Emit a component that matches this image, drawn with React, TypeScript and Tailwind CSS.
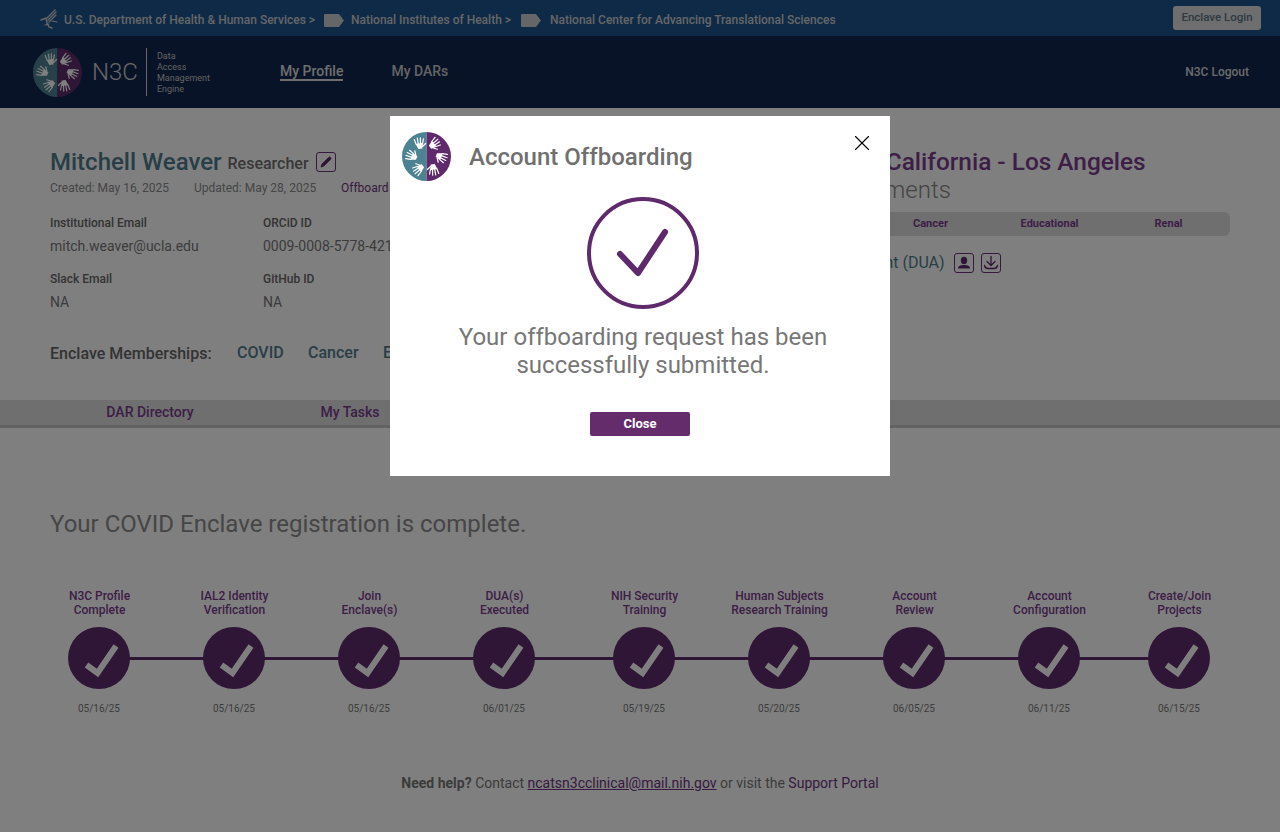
import React from "react";
import { Pencil, X } from "lucide-react";

const steps = [
  { top: "N3C Profile", bottom: "Complete", date: "05/16/25", gap: "ml-0" },
  { top: "IAL2 Identity", bottom: "Verification", date: "05/16/25", gap: "ml-[35px]" },
  { top: "Join", bottom: "Enclave(s)", date: "05/16/25", gap: "ml-[35px]" },
  { top: "DUA(s)", bottom: "Executed", date: "06/01/25", gap: "ml-[35px]" },
  { top: "NIH Security", bottom: "Training", date: "05/19/25", gap: "ml-[40px]" },
  { top: "Human Subjects", bottom: "Research Training", date: "05/20/25", gap: "ml-[35px]" },
  { top: "Account", bottom: "Review", date: "06/05/25", gap: "ml-[35px]" },
  { top: "Account", bottom: "Configuration", date: "06/11/25", gap: "ml-[35px]" },
  { top: "Create/Join", bottom: "Projects", date: "06/15/25", gap: "ml-[30px]" },
];

const Hand = ({ angle }: { angle: number }) => (
  <g transform={`rotate(${angle} 24.5 24.5)`}>
    <g transform="rotate(22 24.5 11)">
      <path d="M22.5 15 L26.5 15 L28 9.5 L20.5 9.5 Z" fill="white" />
      <g stroke="white" strokeWidth="1.2" strokeLinecap="round">
        <line x1="21" y1="10" x2="19.8" y2="5" />
        <line x1="23.2" y1="10" x2="23" y2="4" />
        <line x1="25.4" y1="10" x2="26" y2="4.2" />
        <line x1="27.5" y1="10" x2="29" y2="5.5" />
        <line x1="27" y1="13" x2="30.5" y2="10.5" />
      </g>
    </g>
  </g>
);

const Logo = ({ className }: { className: string }) => (
  <svg viewBox="0 0 49 49" className={className}>
    <path d="M24.5 0 A24.5 24.5 0 0 0 24.5 49 Z" fill="#4d8292" />
    <path d="M24.5 0 A24.5 24.5 0 0 1 24.5 49 Z" fill="#5e2a6c" />
    {[30, 90, 150, 210, 270, 330].map((a) => (
      <Hand key={a} angle={a} />
    ))}
  </svg>
);

const Tag = () => (
  <svg viewBox="0 0 21 13" className="w-[21px] h-[13px] shrink-0">
    <path d="M1 0 H15 L20 6.5 L15 13 H1 Q0 13 0 12 V1 Q0 0 1 0 Z" fill="#c9ccd0" />
    <path d="M16.5 0.5 L20.6 6.5 L16.5 12.5" fill="none" stroke="#1f558f" strokeWidth="1" />
  </svg>
);

const Eagle = () => (
  <svg viewBox="0 0 18 20" className="w-[18px] h-[20px] shrink-0" fill="none" stroke="#c9ccd0" strokeLinecap="round">
    <path d="M7 9 L15 1" strokeWidth="1.3" />
    <path d="M8 11 L16 3" strokeWidth="1.3" />
    <path d="M9 13 L16 6" strokeWidth="1.3" />
    <path d="M1 11 L6 9 L7 14 L9 18 L12 19" strokeWidth="1.5" />
    <path d="M5 16 L9 15" strokeWidth="1.2" />
    <path d="M12 12 L17 13" strokeWidth="1.2" />
  </svg>
);

const Field = ({ label, value, className }: { label: string; value: string; className: string }) => (
  <div className={className}>
    <p className="text-[12px] leading-[14px] font-medium text-[#666]">{label}</p>
    <p className="mt-[7px] text-[14px] leading-[18px] text-[#777] whitespace-nowrap">{value}</p>
  </div>
);

const IconBox = ({ children }: { children: React.ReactNode }) => (
  <span className="w-5 h-5 flex items-center justify-center rounded-[3px] border border-[#6b3478] text-[#5e2a6c]">
    {children}
  </span>
);

export default function App() {
  return (
    <div className="relative h-[832px] overflow-hidden bg-white font-['Roboto',sans-serif]">
      {/* top strip */}
      <div className="h-9 bg-[#1f558f] flex items-center pl-10 pr-[19px] text-[12px] font-medium text-[#c9ccd0]">
        <span className="mt-[2px]"><Eagle /></span>
        <span className="ml-[6px] mt-1 whitespace-nowrap">U.S. Department of Health &amp; Human Services &gt;</span>
        <span className="ml-[9px] mt-1"><Tag /></span>
        <span className="ml-[6px] mt-1 whitespace-nowrap">National Institutes of Health &gt;</span>
        <span className="ml-[10px] mt-1"><Tag /></span>
        <span className="ml-[8px] mt-1 whitespace-nowrap">National Center for Advancing Translational Sciences</span>
        <button className="ml-auto w-[88px] h-6 rounded-[3px] bg-[#dcdcdc] text-[11.5px] font-medium text-[#5a7486]">
          Enclave Login
        </button>
      </div>

      {/* nav */}
      <div className="h-[72px] bg-[#10264e] flex items-center pl-[33px] pr-[31px]">
        <Logo className="w-[49px] h-[49px] shrink-0" />
        <span className="ml-[10px] text-[24px] font-light text-[#d0d0d0]">N3C</span>
        <div className="ml-2 w-px h-12 bg-[#d0d0d0]" />
        <div className="ml-[10px] mt-[2px] w-[53px] text-[9px] leading-[11px] text-[#c4c4c4]">
          <p>Data</p>
          <p>Access</p>
          <p>Management</p>
          <p>Engine</p>
        </div>
        <a className="ml-[70px] text-[14px] font-medium leading-4 text-[#dcdcdc] border-b-2 border-[#dcdcdc]">My Profile</a>
        <a className="ml-[48px] mb-[2px] text-[14px] font-medium text-[#c8c8c8]">My DARs</a>
        <a className="ml-auto text-[12px] font-medium text-[#d8d8d8]">N3C Logout</a>
      </div>

      {/* profile */}
      <div className="h-[292px] flex pl-[50px] pr-[50px]">
        <div className="w-[690px] pt-[39px]">
          <div className="flex items-center h-[30px]">
            <h1 className="text-[24px] font-medium text-[#4f7c8e] whitespace-nowrap">Mitchell Weaver</h1>
            <span className="ml-[6px] mt-[3px] text-[16px] font-medium text-[#707070]">Researcher</span>
            <span className="ml-[7px]">
              <IconBox><Pencil size={12} fill="currentColor" strokeWidth={1.5} /></IconBox>
            </span>
          </div>
          <div className="flex mt-[3px] text-[12px] leading-[16px] text-[#8a8a8a]">
            <span className="w-[144px]">Created: May 16, 2025</span>
            <span className="w-[147px]">Updated: May 28, 2025</span>
            <span className="text-[#6e3580]">Offboard</span>
          </div>
          <div className="mt-[20px] flex">
            <Field className="w-[213px]" label="Institutional Email" value="mitch.weaver@ucla.edu" />
            <Field className="w-[213px]" label="ORCiD ID" value="0009-0008-5778-4210" />
          </div>
          <div className="mt-[17px] flex">
            <Field className="w-[213px]" label="Slack Email" value="NA" />
            <Field className="w-[213px]" label="GitHub ID" value="NA" />
          </div>
          <div className="mt-[31px] flex items-center text-[16px] font-medium">
            <span className="text-[#666] w-[187px]">Enclave Memberships:</span>
            <span className="-mt-[2px] text-[#4f7c8e] w-[71px]">COVID</span>
            <span className="-mt-[2px] text-[#4f7c8e] w-[75px]">Cancer</span>
            <span className="-mt-[2px] text-[#4f7c8e]">Educational</span>
          </div>
        </div>
        <div className="flex-1 pt-[39px]">
          <h2 className="ml-[3px] text-[24.4px] leading-[30px] font-medium text-[#7a3c8e] whitespace-nowrap">University of California - Los Angeles</h2>
          <p className="ml-[15px] text-[24px] leading-[27px] font-light text-[#888] whitespace-nowrap">Active Enrollments</p>
          <div className="mt-[8px] h-6 w-[490px] rounded-md bg-[#dedede] flex items-center pl-[12px] text-[11px] font-bold text-[#7a3c8e]">
            <span className="w-[119px] text-center">COVID</span>
            <span className="w-[119px] text-center">Cancer</span>
            <span className="w-[119px] text-center">Educational</span>
            <span className="w-[119px] text-center">Renal</span>
          </div>
          <div className="mt-[15px] flex items-center text-[16px] text-[#4f7c8e]">
            <span className="w-[214px] pl-[12px] whitespace-nowrap">Data Use Agreement (DUA)</span>
            <IconBox>
              <svg viewBox="0 0 18 18" className="w-[18px] h-[18px]" fill="currentColor">
                <ellipse cx="9" cy="6.5" rx="3.2" ry="3.7" />
                <path d="M3 14.5 C3 11.5 6 11 9 11 C12 11 15 11.5 15 14.5 Z" />
              </svg>
            </IconBox>
            <span className="ml-[7px]">
              <IconBox>
                <svg viewBox="0 0 18 18" className="w-[18px] h-[18px]" fill="none" stroke="currentColor" strokeWidth="1.3" strokeLinecap="round" strokeLinejoin="round">
                  <path d="M9 2.5 V11" />
                  <path d="M5 7.5 L9 11.5 L13 7.5" />
                  <path d="M2.5 11.5 C3 14 4.5 14.5 6 14.5 H12 C13.5 14.5 15 14 15.5 11.5" />
                </svg>
              </IconBox>
            </span>
          </div>
        </div>
      </div>

      {/* tabs */}
      <div className="h-[28px] bg-[#dedede] border-b-[3px] border-[#c4c4c4] flex items-center pl-[50px] text-[14px] font-medium text-[#7a3c8e]">
        <span className="w-[200px] text-center">DAR Directory</span>
        <span className="w-[200px] text-center">My Tasks</span>
        <span className="w-[200px] text-center">My Projects</span>
      </div>

      <h2 className="mt-[81px] pl-[50px] text-[24px] leading-[30px] text-[#8c8c8c]">
        Your COVID Enclave registration is complete.
      </h2>

      {/* stepper */}
      <div className="relative mt-[50px] pl-[49px] flex">
        <div className="absolute left-[99px] w-[1080px] top-[68px] h-[3px] bg-[#5e2a6c]" />
        {steps.map((s, i) => (
          <div key={i} className={`relative w-[100px] shrink-0 flex flex-col items-center ${s.gap}`}>
            <p className="text-[12px] leading-[14px] font-medium text-[#7a3c8e] text-center whitespace-nowrap translate-x-[0.5px]">
              {s.top}
              <br />
              {s.bottom}
            </p>
            <div className="mt-[10px] w-[62px] h-[62px] rounded-full bg-[#5e2a6c]">
              <svg viewBox="0 0 62 62" className="w-[62px] h-[62px]">
                <polyline points="18.5,38 29.5,46 48,19" fill="none" stroke="white" strokeWidth="6" />
              </svg>
            </div>
            <p className="mt-[13px] text-[10px] leading-[14px] text-[#7a7a7a]">{s.date}</p>
          </div>
        ))}
      </div>

      <p className="mt-[58px] text-center text-[14px] leading-[18px] text-[#777]">
        <span className="font-bold">Need help?</span> Contact{" "}
        <a className="underline text-[#6e3580]">ncatsn3cclinical@mail.nih.gov</a> or visit the{" "}
        <a className="text-[#6e3580]">Support Portal</a>
      </p>

      {/* modal */}
      <div className="fixed inset-0 bg-black/50 flex justify-center items-start pt-[116px]">
        <div className="relative w-[500px] h-[360px] bg-white pt-4">
          <div className="flex items-center pl-3">
            <Logo className="w-[49px] h-[49px]" />
            <h3 className="ml-[18px] text-[24px] font-medium text-[#707070] whitespace-nowrap">Account Offboarding</h3>
          </div>
          <button className="absolute right-[15px] top-[14px] text-black">
            <X size={26} strokeWidth={1} />
          </button>
          <div className="mt-4 pl-[6px] flex flex-col items-center">
            <svg viewBox="0 0 112 112" className="w-[112px] h-[112px]">
              <circle cx="56" cy="56" r="54" fill="none" stroke="#5e2a6c" strokeWidth="4" />
              <polyline points="33,57 51,76 78,35" fill="none" stroke="#5e2a6c" strokeWidth="6" strokeLinecap="round" strokeLinejoin="round" />
            </svg>
            <p className="mt-[14px] text-[24px] leading-[28px] text-[#777] text-center whitespace-nowrap">
              Your offboarding request has been
              <br />
              successfully submitted.
            </p>
          </div>
          <div className="mt-[33px] flex justify-center">
            <button className="w-[100px] h-6 rounded-[2px] bg-[#652c6c] text-white text-[13px] font-bold">Close</button>
          </div>
        </div>
      </div>
    </div>
  );
}
